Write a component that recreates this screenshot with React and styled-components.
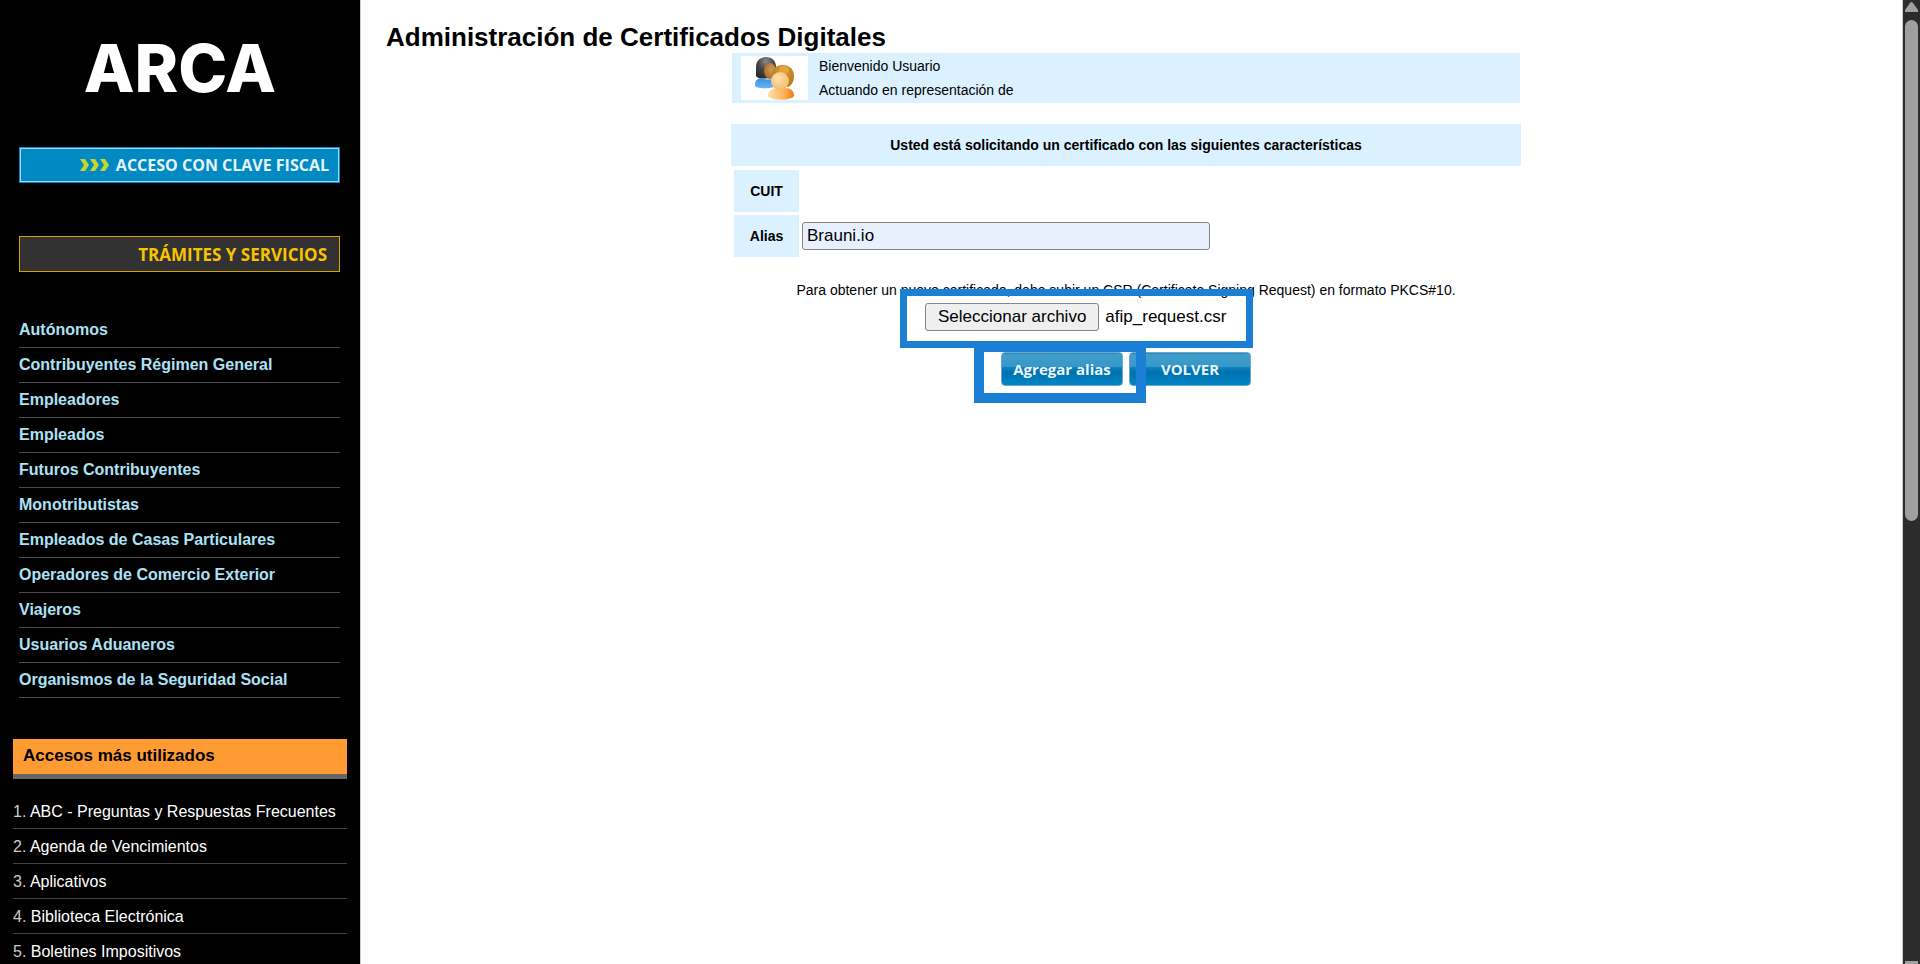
import { useRef, useState } from 'react';
import styled, { createGlobalStyle } from 'styled-components';

const NAV_LINKS = [
  'Autónomos',
  'Contribuyentes Régimen General',
  'Empleadores',
  'Empleados',
  'Futuros Contribuyentes',
  'Monotributistas',
  'Empleados de Casas Particulares',
  'Operadores de Comercio Exterior',
  'Viajeros',
  'Usuarios Aduaneros',
  'Organismos de la Seguridad Social',
];

const TOP_LINKS = [
  'ABC - Preguntas y Respuestas Frecuentes',
  'Agenda de Vencimientos',
  'Aplicativos',
  'Biblioteca Electrónica',
  'Boletines Impositivos',
];

//Two people, dark hair behind and blond in front.
const UsersIcon = () => (
  <svg width="44" height="44" viewBox="0 0 44 44" aria-hidden="true">
    <defs>
      <radialGradient id="hairDark" cx="0.5" cy="0.2" r="0.8">
        <stop offset="0" stopColor="#8b8b8b" />
        <stop offset="0.5" stopColor="#444" />
        <stop offset="1" stopColor="#2b2b2b" />
      </radialGradient>
      <radialGradient id="faceDark" cx="0.6" cy="0.4" r="0.7">
        <stop offset="0" stopColor="#d39a55" />
        <stop offset="1" stopColor="#a0672b" />
      </radialGradient>
      <radialGradient id="hairGold" cx="0.5" cy="0.3" r="0.7">
        <stop offset="0" stopColor="#d99a2e" />
        <stop offset="1" stopColor="#b07c1c" />
      </radialGradient>
      <radialGradient id="faceLight" cx="0.4" cy="0.35" r="0.7">
        <stop offset="0" stopColor="#ffe3ad" />
        <stop offset="1" stopColor="#f3b768" />
      </radialGradient>
      <linearGradient id="shirtBlue" x1="0" y1="0" x2="0" y2="1">
        <stop offset="0" stopColor="#3a8fe0" />
        <stop offset="1" stopColor="#64b8f8" />
      </linearGradient>
      <linearGradient id="shirtOrange" x1="0" y1="0" x2="1" y2="0">
        <stop offset="0" stopColor="#ffe0a8" />
        <stop offset="0.6" stopColor="#fbb45c" />
        <stop offset="1" stopColor="#ef7a17" />
      </linearGradient>
    </defs>
    <path
      d="M3 20V11C3 5 7 1 13 1s10 4 10 10v8c-3 4-18 5-20 1z"
      fill="url(#hairDark)"
    />
    <path
      d="M2 29c0-4 2-7 7-7 4 2 8 2 12 0v9c-6 2-19 2-19-2z"
      fill="url(#shirtBlue)"
    />
    <ellipse cx="17" cy="15" rx="6" ry="8" fill="url(#faceDark)" />
    <path
      d="M19 17c1-6 6-8 11-8 7 0 11 5 11 11 0 5-2 9-6 11l-15-9z"
      fill="url(#hairGold)"
    />
    <ellipse cx="31" cy="14" rx="5" ry="4" fill="#e0a440" />
    <path
      d="M15 40c0-5 4-8 10-8h7c6 0 9 3 9 8-3 5-23 5-26 0z"
      fill="url(#shirtOrange)"
    />
    <ellipse cx="27" cy="25" rx="9" ry="9" fill="url(#faceLight)" />
  </svg>
);

const Chevrons = () => (
  <svg width="32" height="12" viewBox="0 0 32 12" fill="#c3d82e" aria-hidden="true">
    <path d="M1 0h5l4 6-4 6H1l4-6z" />
    <path d="M11 0h5l4 6-4 6h-5l4-6z" />
    <path d="M21 0h5l4 6-4 6h-5l4-6z" />
  </svg>
);

const Sidebar = () => (
  <Aside>
    <Logo>ARCA</Logo>
    <AccessLink href="#clave-fiscal">
      <Chevrons />
      ACCESO CON CLAVE FISCAL
    </AccessLink>
    <ServicesLink href="#tramites">TRÁMITES Y SERVICIOS</ServicesLink>
    <NavList>
      {NAV_LINKS.map((label) => (
        <NavItem key={label}>
          <NavLink href="#">{label}</NavLink>
        </NavItem>
      ))}
    </NavList>
    <TopTitle>Accesos más utilizados</TopTitle>
    <TopList>
      {TOP_LINKS.map((label, i) => (
        <TopItem key={label}>
          {i + 1}. <TopLink href="#">{label}</TopLink>
        </TopItem>
      ))}
    </TopList>
  </Aside>
);

const FilePicker = () => {
  const inputRef = useRef(null);
  const [fileName, setFileName] = useState('afip_request.csr');

  return (
    <Picker>
      <PickerButton type="button" onClick={() => inputRef.current.click()}>
        Seleccionar archivo
      </PickerButton>
      <span>{fileName}</span>
      <input
        ref={inputRef}
        type="file"
        aria-label="Archivo CSR"
        hidden
        onChange={(e) => setFileName(e.target.files[0]?.name ?? '')}
      />
      <PickerHighlight />
    </Picker>
  );
};

const ScrollRail = () => (
  <Rail aria-hidden="true">
    <svg width="13" height="12" viewBox="0 0 13 12">
      <path d="M5 2q1.500-2 3 0l5 7v2H0V9z" fill="#a0a0a0" />
    </svg>
    <Thumb />
    <RailEnd />
  </Rail>
);

const App = () => {
  const [alias, setAlias] = useState('Brauni.io');

  return (
    <Page>
      <GlobalStyle />
      <Sidebar />
      <Main>
        <Title>Administración de Certificados Digitales</Title>
        <Welcome>
          <Avatar>
            <UsersIcon />
          </Avatar>
          <div>
            <WelcomeLine>Bienvenido Usuario</WelcomeLine>
            <WelcomeLine>Actuando en representación de</WelcomeLine>
          </div>
        </Welcome>
        <Form onSubmit={(e) => e.preventDefault()}>
          <FormTitle>
            Usted está solicitando un certificado con las siguientes
            características
          </FormTitle>
          <Fields>
            <FieldLabel as="span">CUIT</FieldLabel>
            <span />
            <FieldLabel htmlFor="alias">Alias</FieldLabel>
            <AliasInput
              id="alias"
              type="text"
              value={alias}
              onChange={(e) => setAlias(e.target.value)}
            />
          </Fields>
          <Hint>
            Para obtener un nuevo certificado, debe subir un CSR (Certificate
            Signing Request) en formato PKCS#10.
          </Hint>
          <FilePicker />
          <Actions>
            <SubmitWrap>
              <ActionButton type="submit">Agregar alias</ActionButton>
              <SubmitHighlight />
            </SubmitWrap>
            <ActionButton type="button">VOLVER</ActionButton>
          </Actions>
        </Form>
      </Main>
      <ScrollRail />
    </Page>
  );
};

//STYLING
const GlobalStyle = createGlobalStyle`
  * {
    box-sizing: border-box;
  }

  body {
    margin: 0;
    background: #fff;
    color: #000;
    font-family: 'Liberation Sans', Arial, sans-serif;
    font-size: 14px;
  }
`;

const Page = styled.div`
  display: flex;
  height: 100vh;
  overflow: hidden;
`;

const Aside = styled.aside`
  flex: 0 0 361px;
  display: flex;
  flex-direction: column;
  padding-top: 45px;
  overflow: hidden;
  background: #000;
  border-right: 1px solid #ccc;
`;

const Logo = styled.div`
  flex: none;
  margin-bottom: 56px;
  color: #fff;
  font-family: Inter, sans-serif;
  font-size: 66px;
  font-weight: 800;
  line-height: 46px;
  text-align: center;
`;

const SideButton = styled.a`
  flex: none;
  display: flex;
  align-items: center;
  justify-content: flex-end;
  gap: 5px;
  height: 36px;
  margin: 0 20px 0 19px;
  padding-right: 10px;
  font-family: 'Open Sans', sans-serif;
  font-weight: 700;
  text-decoration: none;
`;

const AccessLink = styled(SideButton)`
  margin-bottom: 53px;
  color: #e6f4fb;
  background: #0089c2;
  border: 1px solid #0089c2;
  box-shadow: inset 0 0 0 1px #a6dcf5;
  font-size: 16px;
`;

const ServicesLink = styled(SideButton)`
  padding-right: 12px;
  color: #f8c300;
  background: #323232;
  border: 1px solid #d6a200;
  font-size: 17px;
`;

const NavList = styled.ul`
  flex: none;
  margin: 41px 20px 41px 19px;
  padding: 0;
  list-style: none;
`;

const NavItem = styled.li`
  border-bottom: 1px solid #4a4a4a;
  line-height: 34px;
`;

const NavLink = styled.a`
  color: #aee0f6;
  font-size: 16px;
  font-weight: 700;
  text-decoration: none;
`;

const TopTitle = styled.h2`
  flex: none;
  margin: 0 13px 15px;
  padding: 0 10px 1px;
  background: #ff9b33;
  border-bottom: 5px solid #666;
  font-size: 17px;
  line-height: 34px;
`;

const TopList = styled.ol`
  flex: none;
  margin: 0 13px;
  padding: 0;
  list-style: none;
`;

const TopItem = styled.li`
  padding-top: 2px;
  border-bottom: 1px solid #444;
  color: #ccc;
  font-size: 16px;
  line-height: 32px;
`;

const TopLink = styled.a`
  color: #fff;
  text-decoration: none;
`;

const Main = styled.main`
  flex: 1;
  min-width: 0;
  padding: 22px 36px 0 25px;
`;

const Title = styled.h1`
  margin: 0;
  font-size: 26px;
  line-height: 31px;
`;

const Welcome = styled.section`
  display: flex;
  align-items: center;
  gap: 11px;
  max-width: 788px;
  height: 50px;
  margin: 0 auto 21px;
  padding-left: 9px;
  background: #dbf1ff;
`;

const Avatar = styled.div`
  display: flex;
  justify-content: center;
  width: 67px;
  background: #fff;
`;

const WelcomeLine = styled.p`
  margin: 0;
  line-height: 24px;
`;

const Form = styled.form`
  display: flex;
  flex-direction: column;
  align-items: center;
  max-width: 790px;
  margin: 0 auto;
`;

const FormTitle = styled.h3`
  width: 100%;
  margin: 0 0 4px;
  background: #dbf1ff;
  font-size: 14px;
  line-height: 42px;
  text-align: center;
`;

const Fields = styled.div`
  display: grid;
  grid-template-columns: 65px 408px;
  align-items: center;
  align-self: flex-start;
  gap: 3px;
  margin: 0 3px 24px;
`;

const FieldLabel = styled.label`
  background: #dbf1ff;
  font-weight: 700;
  line-height: 42px;
  text-align: center;
`;

const AliasInput = styled.input`
  height: 28px;
  padding: 0 4px;
  background: #e8f0fe;
  border: 1px solid #858585;
  border-radius: 3px;
  font-family: inherit;
  font-size: 17px;
`;

const Hint = styled.p`
  margin: 0 0 4px;
  line-height: 18px;
`;

const Picker = styled.div`
  position: relative;
  display: flex;
  align-items: center;
  gap: 6px;
  width: 402px;
  margin-bottom: 21px;
  font-size: 17px;
`;

const PickerButton = styled.button`
  height: 28px;
  padding: 0 12px;
  background: #efefef;
  border: 1px solid #858585;
  border-radius: 3px;
  color: #000;
  font-family: inherit;
  font-size: 17px;
`;

//Frames drawn over the form to point out a step.
const Highlight = styled.div`
  position: absolute;
  border: solid #1b7fd6;
  pointer-events: none;
`;

const PickerHighlight = styled(Highlight)`
  top: -14px;
  left: -25px;
  width: 353px;
  height: 59px;
  border-width: 7px;
`;

const SubmitHighlight = styled(Highlight)`
  top: -10px;
  left: -27px;
  width: 172px;
  height: 61px;
  border-width: 10px;
`;

const Actions = styled.div`
  display: flex;
  gap: 6px;
`;

const SubmitWrap = styled.div`
  position: relative;
`;

const ActionButton = styled.button`
  display: block;
  width: 122px;
  height: 34px;
  padding: 0;
  background: linear-gradient(
    #2b86b8 0,
    #3f9dcb 6%,
    #3a98c8 42%,
    #0a83c0 44%,
    #0071ad 60%,
    #0083c4 95%
  );
  border: 1px solid #6ba9cb;
  border-radius: 4px;
  color: #eaf6fc;
  font-family: 'Open Sans', sans-serif;
  font-size: 15px;
  font-weight: 700;
`;

const Rail = styled.div`
  flex: 0 0 18px;
  display: flex;
  flex-direction: column;
  align-items: center;
  padding-top: 1px;
  background: #2c2c2c;
  border-left: 1px solid #ccc;
`;

const Thumb = styled.div`
  width: 13px;
  height: 52%;
  margin: 7px 0 auto;
  background: #9f9f9f;
  border-radius: 7px;
`;

const RailEnd = styled.div`
  width: 13px;
  height: 3px;
  background: #a0a0a0;
`;

export default App;
